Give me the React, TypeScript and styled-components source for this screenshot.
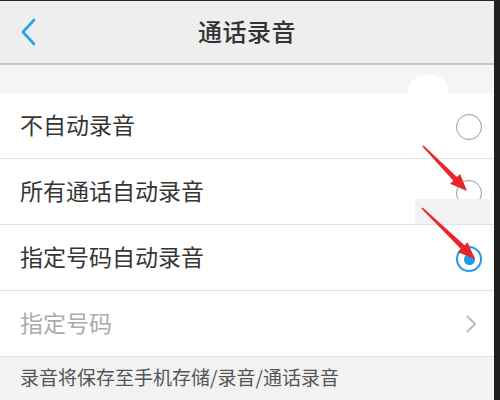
import React from "react";
import styled, { createGlobalStyle } from "styled-components";

const GlobalStyle = createGlobalStyle`
  html, body {
    margin: 0;
    padding: 0;
    background: #ffffff;
  }
  body {
    font-family: "Noto Sans CJK SC", "Noto Sans", sans-serif;
  }
`;

const options = [
  { label: "不自动录音", checked: false },
  { label: "所有通话自动录音", checked: false },
  { label: "指定号码自动录音", checked: true },
];

// arrow tail -> tip, in page pixels
const arrows = [
  { x1: 423, y1: 145, x2: 467, y2: 190 },
  { x1: 422, y1: 207, x2: 475, y2: 258 },
];

function arrowPoints(a: { x1: number; y1: number; x2: number; y2: number }) {
  const dx = a.x2 - a.x1;
  const dy = a.y2 - a.y1;
  const len = Math.sqrt(dx * dx + dy * dy);
  const ux = dx / len;
  const uy = dy / len;
  const px = -uy;
  const py = ux;
  const headLen = 17;
  const bx = a.x2 - ux * headLen;
  const by = a.y2 - uy * headLen;
  const pts = [
    [a.x1 + px * 0.8, a.y1 + py * 0.8],
    [bx + px * 2.6, by + py * 2.6],
    [bx + px * 7, by + py * 7],
    [a.x2, a.y2],
    [bx - px * 7, by - py * 7],
    [bx - px * 2.6, by - py * 2.6],
    [a.x1 - px * 0.8, a.y1 - py * 0.8],
  ];
  return pts.map((p) => p.map((v) => v.toFixed(1)).join(",")).join(" ");
}

export default function App() {
  return (
    <>
      <GlobalStyle />
      <Frame>
        <Header>
          <BackButton>
            <svg width="18" height="28" viewBox="0 0 18 28">
              <path
                d="M14 2 L3 14 L14 26"
                fill="none"
                stroke="#2aa2e6"
                strokeWidth="2.6"
                strokeLinecap="round"
                strokeLinejoin="round"
              />
            </svg>
          </BackButton>
          <Title>通话录音</Title>
        </Header>
        <Spacer />
        <List>
          {options.map((o) => (
            <Row key={o.label}>
              <Label>{o.label}</Label>
              <Radio $checked={o.checked} />
            </Row>
          ))}
          <Row>
            <Label $muted>指定号码</Label>
            <Chevron>
              <svg width="12" height="20" viewBox="0 0 12 20">
                <path
                  d="M2 2 L10 10 L2 18"
                  fill="none"
                  stroke="#bdbdbd"
                  strokeWidth="2"
                  strokeLinejoin="round"
                />
              </svg>
            </Chevron>
          </Row>
        </List>
        <Footer>录音将保存至手机存储/录音/通话录音</Footer>

        <Smudge />
        <Patch />
        <Overlay width="500" height="400" viewBox="0 0 500 400">
          {arrows.map((a, i) => (
            <polygon key={i} points={arrowPoints(a)} fill="#e8262a" />
          ))}
        </Overlay>
      </Frame>
    </>
  );
}

const Frame = styled.div`
  position: relative;
  width: 500px;
  height: 400px;
  box-sizing: border-box;
  border-top: 1px solid #262626;
  border-right: 6px solid #1f1f1f;
  overflow: hidden;
  display: flex;
  flex-direction: column;
  background: #ffffff;
`;

const Header = styled.div`
  position: relative;
  height: 62px;
  flex: none;
  background: #eeeeee;
  border-bottom: 2px solid #c6c6c6;
  display: flex;
  align-items: center;
  justify-content: center;
`;

const BackButton = styled.div`
  position: absolute;
  left: 20px;
  top: 17px;
  display: flex;
`;

const Title = styled.div`
  font-size: 24px;
  font-weight: 500;
  color: #333333;
  letter-spacing: 0.5px;
  line-height: 1;
  margin-bottom: 2px;
`;

const Spacer = styled.div`
  height: 28px;
  flex: none;
  background: #f5f5f5;
`;

const List = styled.div`
  display: flex;
  flex-direction: column;
  background: #ffffff;
`;

const Row = styled.div`
  height: 65px;
  flex: none;
  display: flex;
  align-items: center;
  justify-content: space-between;
  padding: 0 12px 0 20px;
  border-bottom: 1px solid #e2e2e2;
  box-sizing: content-box;
`;

const Label = styled.div<{ $muted?: boolean }>`
  font-size: 23px;
  line-height: 1;
  margin-bottom: 2px;
  color: ${(p) => (p.$muted ? "#ababab" : "#363636")};
`;

const Radio = styled.div<{ $checked: boolean }>`
  width: 26px;
  height: 26px;
  margin-top: 3px;
  border-radius: 50%;
  box-sizing: border-box;
  border: ${(p) => (p.$checked ? "2px solid #1e9be6" : "1.5px solid #9a9a9a")};
  display: flex;
  align-items: center;
  justify-content: center;

  &::after {
    content: "";
    display: ${(p) => (p.$checked ? "block" : "none")};
    width: 11px;
    height: 11px;
    border-radius: 50%;
    background: #1e9be6;
  }
`;

const Chevron = styled.div`
  display: flex;
  margin-right: 5px;
`;

const Footer = styled.div`
  flex: 1;
  background: #f2f2f2;
  color: #555555;
  font-size: 19px;
  line-height: 1;
  padding: 10px 0 0 20px;
`;

const Patch = styled.div`
  position: absolute;
  left: 415px;
  top: 198px;
  width: 75px;
  height: 25px;
  background: #f2f2f2;
`;

const Smudge = styled.div`
  position: absolute;
  left: 408px;
  top: 74px;
  width: 40px;
  height: 19px;
  border-radius: 70% 60% 0 0 / 100% 100% 0 0;
  background: #ffffff;
`;

const Overlay = styled.svg`
  position: absolute;
  left: 0;
  top: 0;
  pointer-events: none;
`;
